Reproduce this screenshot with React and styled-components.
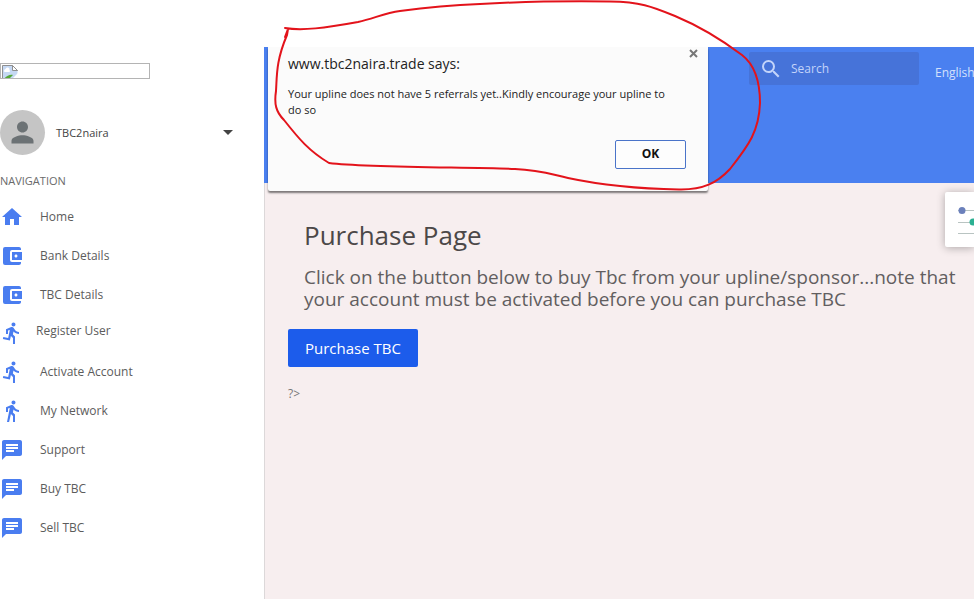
import React from "react";
import styled, { createGlobalStyle } from "styled-components";
import {
  MdHome,
  MdAccountBalanceWallet,
  MdDirectionsRun,
  MdDirectionsWalk,
  MdChat,
  MdSearch,
  MdPerson,
} from "react-icons/md";

const GlobalStyle = createGlobalStyle`
  *, *::before, *::after { box-sizing: border-box; }
  body {
    margin: 0;
    background: #fff;
    color: #555;
    font-family: "Open Sans", "Noto Sans", sans-serif;
    font-size: 12px;
  }
  button, input { font: inherit; }
`;

const Page = styled.div`
  position: relative;
  display: flex;
  min-height: 100vh;
  overflow: hidden;
`;

const Sidebar = styled.aside`
  flex: 0 0 264px;
  padding-top: 63px;
`;

const Logo = styled.div`
  width: 150px;
  height: 16px;
  padding: 1px 1px 0;
  border: 1px solid #b4b4b4;
  overflow: hidden;

  svg { display: block; }
`;

const Profile = styled.button`
  display: flex;
  align-items: center;
  gap: 11px;
  width: 100%;
  margin-top: 31px;
  padding: 0 31px 0 0;
  border: 0;
  background: none;
  color: #444;
  font-size: 11px;
  text-align: left;
`;

const Avatar = styled.span`
  display: flex;
  align-items: center;
  justify-content: center;
  width: 45px;
  height: 45px;
  border-radius: 50%;
  background: #c5c5c5;
  color: #6c7275;
`;

const Caret = styled.span`
  margin-left: auto;
  border: 5px solid transparent;
  border-top-color: #444;
  border-bottom-width: 0;
`;

const NavTitle = styled.h2`
  margin: 18px 0 8px;
  color: #6a6a6a;
  font-size: 11px;
  font-weight: 400;
  line-height: 16px;
`;

const NavList = styled.ul`
  margin: 0;
  padding: 0;
  list-style: none;
`;

const NavLink = styled.a`
  display: flex;
  align-items: center;
  gap: ${(p) => (p.$tight ? "12px" : "16px")};
  height: ${(p) => (p.$tight ? "38px" : "39px")};
  color: #5c5c5c;
  font-size: 12px;
  text-decoration: none;

  svg { color: #4a7df0; flex: none; }
  span { padding-bottom: ${(p) => (p.$tight ? "6px" : "0")}; }
`;

const Main = styled.div`
  flex: 1;
  min-width: 0;
  display: flex;
  flex-direction: column;
  padding-top: 47px;
`;

const Header = styled.header`
  display: flex;
  justify-content: flex-end;
  align-items: flex-start;
  height: 136px;
  padding-top: 5px;
  background: #4a80f0;
  overflow: hidden;
`;

const SearchBox = styled.label`
  display: flex;
  align-items: center;
  gap: 8px;
  width: 170px;
  height: 33px;
  padding-left: 10px;
  border-radius: 2px;
  background: #4673d9;
  color: #c3d4fa;

  input {
    width: 110px;
    padding: 0;
    border: 0;
    outline: 0;
    background: none;
    color: inherit;
    font-size: 12px;
  }
  input::placeholder { color: inherit; opacity: 1; }
`;

const Language = styled.button`
  flex: none;
  width: 39px;
  margin: 12px 0 0 16px;
  padding: 0;
  border: 0;
  background: none;
  color: #d3e0fc;
  font-size: 12px;
  line-height: 18px;
  text-align: left;
  white-space: nowrap;
  overflow: hidden;
`;

const Content = styled.main`
  flex: 1;
  padding: 36px 0 24px 23px;
  border-left: 1px solid #dcd8d9;
  background: #f7eeef;
`;

const Intro = styled.section`
  padding: 0 16px;
`;

const Title = styled.h1`
  margin: 0;
  color: #4c4848;
  font-size: 26px;
  font-weight: 400;
  line-height: 32px;
`;

const Lead = styled.p`
  margin: 15px 0 0;
  color: #625e5f;
  font-size: 19px;
  font-weight: 400;
  line-height: 22px;
`;

const PurchaseButton = styled.button`
  display: block;
  height: 38px;
  margin-top: 19px;
  padding: 0 17px;
  border: 0;
  border-radius: 2px;
  background: #1c5ceb;
  color: #fff;
  font-size: 15px;
`;

const Stray = styled.p`
  margin: 18px 0 0;
  color: #777;
  font-size: 12px;
  line-height: 18px;
`;

const SettingsTab = styled.button`
  position: absolute;
  top: 192px;
  right: 0;
  width: 29px;
  height: 55px;
  padding: 0;
  border: 0;
  border-radius: 2px 0 0 2px;
  background: #fff;
  box-shadow: 0 1px 8px rgba(0, 0, 0, 0.3);

  svg { display: block; }
`;

const Dialog = styled.div`
  position: absolute;
  top: 47px;
  left: 268px;
  display: flex;
  flex-direction: column;
  width: 440px;
  height: 144px;
  padding: 7px 22px 22px 20px;
  border-radius: 0 0 2px 2px;
  background: #fbfbfb;
  color: #222;
  box-shadow: 0 2px 2px rgba(0, 0, 0, 0.5);
`;

const DialogTitle = styled.h2`
  margin: 0;
  font-size: 14px;
  font-weight: 400;
  line-height: 20px;
`;

const DialogText = styled.p`
  margin: 12px 0 0;
  padding-right: 12px;
  font-size: 11px;
  line-height: 16px;
`;

const OkButton = styled.button`
  align-self: flex-end;
  width: 71px;
  height: 29px;
  margin-top: auto;
  padding: 0 0 2px;
  border: 1px solid #4a74c9;
  border-radius: 2px;
  background: #fdfdfd;
  color: #111;
  font-size: 12px;
  font-weight: 700;
`;

const CloseButton = styled.button`
  position: absolute;
  top: 2px;
  right: 10px;
  width: 9px;
  height: 9px;
  padding: 0;
  border: 0;
  background: none;

  svg { display: block; }
`;

const Scribble = styled.svg`
  position: absolute;
  top: 0;
  left: 268px;
  overflow: visible;
  pointer-events: none;
`;

const NAV = [
  { label: "Home", Icon: MdHome },
  { label: "Bank Details", Icon: MdAccountBalanceWallet },
  { label: "TBC Details", Icon: MdAccountBalanceWallet },
  { label: "Register User", Icon: MdDirectionsRun, tight: true },
  { label: "Activate Account", Icon: MdDirectionsRun },
  { label: "My Network", Icon: MdDirectionsWalk },
  { label: "Support", Icon: MdChat },
  { label: "Buy TBC", Icon: MdChat },
  { label: "Sell TBC", Icon: MdChat },
];

function MissingImage() {
  return (
    <svg width="16" height="16" viewBox="0 0 16 16" role="img" aria-label="Logo">
      <path d="M.5 16V.5h10l5 5V16z" fill="#c5d8f3" />
      <path d="M.5 16V.5h10l5 5" fill="none" stroke="#8f8f8f" />
      <path d="M10.500 .5v5h5z" fill="#fff" stroke="#8f8f8f" />
      <path d="M2.500 7a1.800 1.800 0 0 1 1-3 2 2 0 0 1 4 1 1.400 1.400 0 0 1 0 2z" fill="#fff" />
      <path d="M2 14c2-3 6-5 9-4l-4 4z" fill="#55a838" />
      <path d="M8 16l8-8v8z" fill="#fff" />
    </svg>
  );
}

export default function App() {
  return (
    <>
      <GlobalStyle />
      <Page>
        <Sidebar>
          <Logo><MissingImage /></Logo>
          <Profile type="button">
            <Avatar><MdPerson size={33} /></Avatar>
            <span>TBC2naira</span>
            <Caret />
          </Profile>
          <nav aria-labelledby="nav-title">
            <NavTitle id="nav-title">NAVIGATION</NavTitle>
            <NavList>
              {NAV.map(({ label, Icon, tight }) => (
                <li key={label}>
                  <NavLink href="#" $tight={tight}>
                    <Icon size={24} />
                    <span>{label}</span>
                  </NavLink>
                </li>
              ))}
            </NavList>
          </nav>
        </Sidebar>

        <Main>
          <Header>
            <SearchBox>
              <MdSearch size={24} />
              <input type="text" placeholder="Search" aria-label="Search" />
            </SearchBox>
            <Language type="button">English</Language>
          </Header>
          <Content>
            <Intro>
              <Title>Purchase Page</Title>
              <Lead>
                Click on the button below to buy Tbc from your upline/sponsor...note that
                your account must be activated before you can purchase TBC
              </Lead>
            </Intro>
            <PurchaseButton type="button">Purchase TBC</PurchaseButton>
            <Stray>?&gt;</Stray>
          </Content>
        </Main>

        <SettingsTab type="button" aria-label="Settings">
          <svg width="29" height="55" viewBox="0 0 29 55">
            <path d="M13 18.500H29M13 30.500H29M13 41.500H29" stroke="#b9c4c2" />
            <circle cx="17" cy="18.500" r="3.500" fill="#6b80bb" />
            <circle cx="28" cy="30" r="3.500" fill="#2bb092" />
          </svg>
        </SettingsTab>

        <Dialog role="dialog" aria-labelledby="dialog-title">
          <DialogTitle id="dialog-title">www.tbc2naira.trade says:</DialogTitle>
          <DialogText>
            Your upline does not have 5 referrals yet..Kindly encourage your upline to do so
          </DialogText>
          <OkButton type="button">OK</OkButton>
          <CloseButton type="button" aria-label="Close">
            <svg width="9" height="9" viewBox="0 0 9 9">
              <path d="M1 1l7 7M8 1l-7 7" stroke="#777" strokeWidth="2" />
            </svg>
          </CloseButton>
        </Dialog>

        <Scribble width="500" height="192" viewBox="268 0 500 192" aria-hidden="true">
          <path
            d="M285 28C302 31 325 28 358 22C375 18 385 13 400 11C430 7 455 5 480 4C515 2 570 1 610 1.500C640 2 651 6 675 16C699 26 718 37 742 55C755 65 760 84 760 103C759 131 749 145 730 169C717 183 703 190 679 189.500C650 189 610 187 568 178C550 174 540 170 515 169C470 167 370 168 329 163C309 151 299 139 284 120C276 112 274 104 276 91C277 75 276 61 287 35L288 29L285 37"
            fill="none"
            stroke="#e3131b"
            strokeWidth="2"
            strokeLinecap="round"
            strokeLinejoin="round"
          />
        </Scribble>
      </Page>
    </>
  );
}
